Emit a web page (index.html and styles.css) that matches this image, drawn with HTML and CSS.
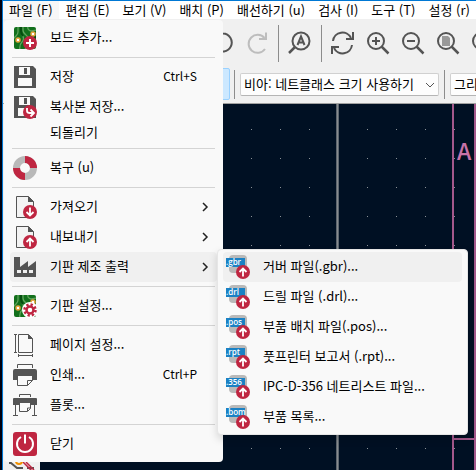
FILE: index.html
```
<!DOCTYPE html>
<html lang="ko">

<head>
  <meta charset="UTF-8" />
  <meta name="viewport" content="width=device-width, initial-scale=1.0" />
  <title>PCB 편집기</title>
  <link rel="stylesheet" href="styles.css">
</head>

<body>
  <!-- shared icon parts -->
  <svg class="defs" width="0" height="0" aria-hidden="true">
    <defs>
      <clipPath id="board-clip"><rect x="1" y="1" width="22" height="22" rx="2" /></clipPath>
      <symbol id="board" viewBox="0 0 24 24">
        <g clip-path="url(#board-clip)">
          <rect x="1" y="1" width="22" height="22" fill="#12701c" />
          <path d="M5 0v6q0 2-2 4l-3 3M10 0v4q0 3 3 5t2 6l-3 9M15 0q-1 4 3 5l6-1M7 24q-1-5 2-8t0-7" fill="none" stroke="#5fa35c" stroke-width="1.3" />
          <path d="M18 9q2 3 6 2M18 24V14M8 0v5q0 3 2 5" fill="none" stroke="#064d10" stroke-width="2" />
        </g>
        <circle cx="5" cy="14" r="2" fill="#fff" stroke="#e6a23c" stroke-width="1.5" />
        <circle cx="20" cy="8" r="2" fill="#fff" stroke="#e6a23c" stroke-width="1.5" />
      </symbol>
      <symbol id="floppy" viewBox="0 0 24 24">
        <path d="M1 1h19l3 3v19H1z" fill="#545454" />
        <path d="M6 2h11v8H6zM5 13h14v8H5z" fill="#f9f9f9" />
        <path d="M11 3h3v6h-3z" fill="#545454" />
      </symbol>
      <symbol id="page" viewBox="0 0 24 24">
        <path d="M3.500 1.500h12l5 5v16h-17z" fill="#f3f3f3" stroke="#545454" />
        <path d="M15 1l6 6h-6z" fill="#545454" />
      </symbol>
      <symbol id="arrow-up" viewBox="0 0 14 14">
        <circle cx="7" cy="7" r="7" fill="#bf2641" />
        <path d="M7 11.500V3.500M3.500 7L7 3.500 10.500 7" fill="none" stroke="#fff" stroke-width="1.800" />
      </symbol>
      <symbol id="lens" viewBox="0 0 24 24">
        <circle cx="10" cy="10" r="8" fill="none" stroke="#545454" stroke-width="2" />
        <path d="M15.500 15.500l7 7" stroke="#545454" stroke-width="2.500" />
      </symbol>
      <symbol id="chevron" viewBox="0 0 8 12">
        <path d="M2 2l4 4-4 4" fill="none" stroke="#222" stroke-width="1.500" />
      </symbol>
    </defs>
  </svg>

  <div class="window">
    <nav class="menubar">
      <button class="open">파일 (F)</button>
      <button>편집 (E)</button>
      <button>보기 (V)</button>
      <button>배치 (P)</button>
      <button>배선하기 (u)</button>
      <button>검사 (I)</button>
      <button>도구 (T)</button>
      <button>설정 (r)</button>
    </nav>

    <div class="toolbar main-tools">
      <button class="tool" aria-label="실행 취소">
        <svg viewBox="0 0 24 24"><path d="M4 6q4-4 9-3.500a9 9 0 1 1-7 15M3 2v6h6" fill="none" stroke="#545454" stroke-width="2" /></svg>
      </button>
      <button class="tool" aria-label="다시 실행">
        <svg viewBox="0 0 24 24"><path d="M19.500 7A9 9 0 1 0 20 18M21 1.500v6.500h-7" fill="none" stroke="#bdbdbd" stroke-width="2" /></svg>
      </button>
      <span class="divider"></span>
      <button class="tool" aria-label="찾기">
        <svg viewBox="0 0 24 24">
          <circle cx="13" cy="10" r="8.500" fill="none" stroke="#545454" stroke-width="2" />
          <path d="M7 16l-6 6" stroke="#545454" stroke-width="2.500" />
          <path d="M9.500 14L13 5.500l3.500 8.500M10.500 11.500h5" fill="none" stroke="#545454" stroke-width="2" />
        </svg>
      </button>
      <span class="divider"></span>
      <button class="tool" aria-label="새로 고침">
        <svg viewBox="0 0 24 24"><path d="M2 10A9.500 9.500 0 0 1 20 7M22 1v7h-7M21 14A9.500 9.500 0 0 1 3 17M1 23v-7h7" fill="none" stroke="#545454" stroke-width="2" /></svg>
      </button>
      <button class="tool" aria-label="확대">
        <svg viewBox="0 0 24 24"><use href="#lens" /><path d="M10 6v8M6 10h8" stroke="#545454" stroke-width="2" /></svg>
      </button>
      <button class="tool" aria-label="축소">
        <svg viewBox="0 0 24 24"><use href="#lens" /><path d="M6 10h8" stroke="#545454" stroke-width="2" /></svg>
      </button>
      <button class="tool" aria-label="화면에 맞춤">
        <svg viewBox="0 0 24 24"><use href="#lens" /><path d="M6 5h6l2 2v8H6z" fill="#999" /></svg>
      </button>
      <button class="tool" aria-label="개체에 맞춤">
        <svg viewBox="0 0 24 24"><use href="#lens" /></svg>
      </button>
    </div>

    <div class="toolbar option-tools">
      <button class="toggle" aria-label="자동 트랙 폭"></button>
      <span class="divider"></span>
      <div class="combo via">
        <select aria-label="비아 크기">
          <option>비아: 네트클래스 크기 사용하기</option>
        </select>
        <svg viewBox="0 0 10 6"><path d="M1 1l4 4 4-4" fill="none" stroke="#555" /></svg>
      </div>
      <span class="divider"></span>
      <div class="combo">
        <select aria-label="그리드">
          <option>그리드: 1.27 mm</option>
        </select>
      </div>
    </div>

    <div class="workspace">
      <aside class="side-tools">
        <svg viewBox="0 0 26 9">
          <path d="M0 2h2l6 5h6M18 7h7" fill="none" stroke="#545454" stroke-width="2" />
          <path d="M14 1l9 9M17 1l8 8" stroke="#bf2641" stroke-width="1.500" />
          <circle cx="10" cy="0" r="3" fill="none" stroke="#f29100" stroke-width="2" />
        </svg>
      </aside>
      <svg class="canvas" aria-label="기판">
        <defs>
          <pattern id="grid" x="8" y="25" width="29" height="29" patternUnits="userSpaceOnUse">
            <rect width="1" height="1" fill="#8a9096" />
          </pattern>
        </defs>
        <rect width="100%" height="100%" fill="url(#grid)" />
        <path d="M297.500 0v900" stroke="#5d666e" stroke-width="3" />
        <path d="M297.500 0v900" stroke="#888c90" />
        <path d="M413 0v900M435 0v900M413 335h22" fill="none" stroke="#a3588b" stroke-width="2" />
        <text x="417" y="56">A</text>
      </svg>
    </div>

    <ul class="menu file-menu">
      <li><button>
        <svg class="icon" viewBox="0 0 24 24"><use href="#board" /><circle cx="17" cy="17" r="7" fill="#bf2641" /><path d="M17 13v8M13 17h8" stroke="#fff" stroke-width="2" /></svg>
        <span class="label">보드 추가...</span></button></li>
      <li class="line"></li>
      <li><button>
        <svg class="icon" viewBox="0 0 24 24"><use href="#floppy" /></svg>
        <span class="label">저장</span> <kbd>Ctrl+S</kbd></button></li>
      <li><button>
        <svg class="icon" viewBox="0 0 24 24"><use href="#floppy" /><circle cx="17" cy="17" r="7" fill="#bf2641" /><path d="M14 13v3q0 2 3 2h3M17.500 14.500L21 18l-3.500 3.500" fill="none" stroke="#fff" stroke-width="1.800" /></svg>
        <span class="label">복사본 저장...</span></button></li>
      <li class="short"><button><span class="icon"></span><span class="label">되돌리기</span></button></li>
      <li class="line"></li>
      <li><button>
        <svg class="icon" viewBox="0 0 24 24">
          <circle cx="12" cy="12" r="8.500" fill="none" stroke="#b9b9b9" stroke-width="7" />
          <path d="M12 3.500A8.500 8.500 0 0 1 20.500 12M12 20.500A8.500 8.500 0 0 1 3.500 12" fill="none" stroke="#bf2641" stroke-width="7" />
        </svg>
        <span class="label">복구 (u)</span></button></li>
      <li class="line"></li>
      <li><button>
        <svg class="icon" viewBox="0 0 24 24"><use href="#page" /><circle cx="17" cy="17" r="7" fill="#bf2641" /><path d="M17 12.500v8M13.500 17l3.500 3.500 3.500-3.500" fill="none" stroke="#fff" stroke-width="1.800" /></svg>
        <span class="label">가져오기</span> <svg class="more"><use href="#chevron" /></svg></button></li>
      <li><button>
        <svg class="icon" viewBox="0 0 24 24"><use href="#page" /><use href="#arrow-up" x="10" y="10" width="14" height="14" /></svg>
        <span class="label">내보내기</span> <svg class="more"><use href="#chevron" /></svg></button></li>
      <li class="active"><button>
        <svg class="icon" viewBox="0 0 24 24">
          <path d="M1 2h6v10l8-6v6l8-6v16H1z" fill="#545454" />
          <path d="M4 15h4v3H4zM10 15h4v3h-4zM16 15h4v3h-4z" fill="#f0f0f0" />
        </svg>
        <span class="label">기판 제조 출력</span> <svg class="more"><use href="#chevron" /></svg></button></li>
      <li class="line"></li>
      <li><button>
        <svg class="icon" viewBox="0 0 24 24">
          <use href="#board" />
          <circle cx="17" cy="16" r="6" fill="none" stroke="#fff" stroke-width="4" />
          <circle cx="17" cy="16" r="5.500" fill="none" stroke="#bf2641" stroke-width="2.500" stroke-dasharray="2.300 2" />
          <circle cx="17" cy="16" r="3.500" fill="#fff" stroke="#bf2641" stroke-width="2.500" />
        </svg>
        <span class="label">기판 설정...</span></button></li>
      <li class="line"></li>
      <li><button>
        <svg class="icon" viewBox="0 0 24 24">
          <path d="M5.500 1.500h10l4 4v14h-14z" fill="#f9f9f9" stroke="#545454" />
          <path d="M15 1l5 5h-5z" fill="#545454" />
          <path d="M1 1.500h3M1 19.500h3M2.500 1.500v18M5.500 21v3M19.500 21v3M5.500 22.500h14" fill="none" stroke="#545454" />
        </svg>
        <span class="label">페이지 설정...</span></button></li>
      <li><button>
        <svg class="icon" viewBox="0 0 24 24">
          <path d="M4.500 5V1.500h15V5" fill="#f9f9f9" stroke="#545454" />
          <path d="M2 6h20q2 0 2 2v9h-4v-3H4v3H0V8q0-2 2-2z" fill="#545454" />
          <path d="M4.500 13v9.500h10l5-5V13M14.500 22.500v-5h5" fill="#f9f9f9" stroke="#545454" />
        </svg>
        <span class="label">인쇄...</span> <kbd>Ctrl+P</kbd></button></li>
      <li><button>
        <svg class="icon" viewBox="0 0 24 24">
          <path d="M6.500 4V1.500h11V4M2.500 10v13M21.500 10v13M0 22.500h5M19 22.500h5" fill="none" stroke="#545454" />
          <path d="M1 5h22q1 0 1 1v6H0V6q0-1 1-1z" fill="#545454" />
          <path d="M6.500 10v8.500h8l3-3V10M14.500 18v-3h3" fill="#f9f9f9" stroke="#545454" />
        </svg>
        <span class="label">플롯...</span></button></li>
      <li class="line"></li>
      <li><button>
        <svg class="icon" viewBox="0 0 24 24">
          <rect width="24" height="24" rx="3" fill="#bf2641" />
          <path d="M8 5a8 8 0 1 0 8 0M12 2.500v9" fill="none" stroke="#fff" stroke-width="2" />
        </svg>
        <span class="label">닫기</span></button></li>
    </ul>

    <ul class="menu output-menu">
      <li class="active"><button><span class="icon ext"><b>.gbr</b><svg><use href="#arrow-up" /></svg></span><span class="label">거버 파일(.gbr)...</span></button></li>
      <li><button><span class="icon ext"><b>.drl</b><svg><use href="#arrow-up" /></svg></span><span class="label">드릴 파일 (.drl)...</span></button></li>
      <li><button><span class="icon ext"><b>.pos</b><svg><use href="#arrow-up" /></svg></span><span class="label">부품 배치 파일(.pos)...</span></button></li>
      <li><button><span class="icon ext"><b>.rpt</b><svg><use href="#arrow-up" /></svg></span><span class="label">풋프린터 보고서 (.rpt)...</span></button></li>
      <li><button><span class="icon ext"><b>.356</b><svg><use href="#arrow-up" /></svg></span><span class="label">IPC-D-356 네트리스트 파일...</span></button></li>
      <li><button><span class="icon ext"><b>.bom</b><svg><use href="#arrow-up" /></svg></span><span class="label">부품 목록...</span></button></li>
    </ul>
  </div>
</body>

</html>
```
FILE: styles.css
```
* {
  box-sizing: border-box;
}

body {
  margin: 0;
  background: #00000f;
  overflow: hidden;
}

body,
button,
select,
kbd {
  font-family: "Noto Sans CJK KR", sans-serif;
  font-size: 13px;
  color: #000;
}

button {
  padding: 0;
  border: none;
  background: none;
}

.defs {
  position: absolute;
}

.window {
  position: relative;
  display: flex;
  flex-direction: column;
  height: 100vh;
  margin-left: 2px;
  border-top: 1px solid #0078d4;
  border-left: 1px solid #0078d4;
  background: #f0f0f0;
}

/* menu bar */
.menubar {
  display: flex;
  gap: 1px;
  height: 18px;
  background: #fff;
}

.menubar button {
  flex: none;
  padding: 0 6px;
  line-height: 18px;
  white-space: nowrap;
}

.menubar .open {
  background: #f7f7f7;
}

/* toolbars */
.toolbar {
  display: flex;
  align-items: center;
  overflow: hidden;
}

.divider {
  flex: none;
  width: 1px;
  background: #8c8c8c;
}

.main-tools {
  height: 48px;
  gap: 11px;
  padding-left: 207px;
}

.main-tools .divider {
  height: 37px;
  margin: 0 -2px;
}

.tool {
  flex: none;
  width: 24px;
  height: 24px;
}

.tool svg {
  display: block;
  width: 24px;
  height: 24px;
}

.option-tools {
  height: 37px;
  gap: 4px;
  padding-bottom: 2px;
  padding-left: 195px;
  border-bottom: 1px solid #a0a0a0;
}

.option-tools .divider {
  height: 29px;
}

.toggle {
  flex: none;
  width: 32px;
  height: 32px;
  border: 1px solid #99d1ff;
  border-radius: 2px;
  background: #cce8ff;
}

.combo {
  position: relative;
  flex: none;
  margin: 0 1px;
}

.via {
  width: 199px;
}

.combo select {
  display: block;
  width: 100%;
  height: 23px;
  padding: 0 3px 2px;
  appearance: none;
  border: 1px solid #d0d0d0;
  border-bottom-color: #b5b5b5;
  border-radius: 2px;
  background: #fdfdfd;
}

.combo svg {
  position: absolute;
  top: 9px;
  right: 4px;
  width: 10px;
  height: 6px;
}

/* board */
.workspace {
  display: flex;
  flex: 1;
  min-height: 0;
}

.side-tools {
  display: flex;
  flex: none;
  align-items: flex-end;
  width: 37px;
  padding-left: 6px;
}

.side-tools svg {
  width: 26px;
  height: 9px;
  overflow: visible;
}

.canvas {
  flex: 1;
  height: 100%;
  background: #001023;
}

.canvas text {
  font-family: "Noto Sans CJK KR", sans-serif;
  font-size: 23px;
  font-weight: 500;
  fill: #c872a8;
}

/* popup menus */
.menu {
  position: absolute;
  margin: 0;
  padding: 3px 6px;
  list-style: none;
  border-radius: 4px;
  background: #f9f9f9;
}

.file-menu {
  top: 19px;
  left: 1px;
  width: 219px;
}

.output-menu {
  top: 248px;
  left: 214px;
  width: 251px;
  border: 1px solid #e6e6e6;
  padding: 2px 5px;
  box-shadow: 0 4px 8px rgba(0, 0, 0, 0.15);
}

.menu button {
  display: flex;
  align-items: center;
  width: 100%;
  height: 30px;
  padding: 0 3px;
  border-radius: 4px;
  text-align: left;
  white-space: nowrap;
}

.menu .short button {
  height: 22px;
}

.menu .active button {
  background: #f0f0f0;
}

.menu .line {
  height: 9px;
  padding: 4px 2px;
}

.menu .line::before {
  content: "";
  display: block;
  height: 1px;
  background: #d4d4d4;
}

.icon {
  flex: none;
  width: 24px;
  height: 24px;
  margin-right: 13px;
}

.label,
.menu kbd {
  padding-bottom: 3px;
}

.menu kbd {
  margin-left: auto;
  padding-right: 17px;
  font-size: 12px;
}

.more {
  width: 8px;
  height: 12px;
  margin-right: 5px;
  margin-left: auto;
}

.ext {
  position: relative;
}

.ext::before {
  content: "";
  position: absolute;
  top: 0;
  left: 3px;
  width: 18px;
  height: 18px;
  border-radius: 4px;
  background: #b9b9b9;
}

.ext b {
  position: absolute;
  top: 3px;
  left: 0;
  width: 19px;
  height: 9px;
  background: #1a81c4;
  color: #fff;
  font: 600 8px/7px "Open Sans", sans-serif;
}

.ext svg {
  position: absolute;
  top: 10px;
  left: 10px;
  width: 14px;
  height: 14px;
}
```
